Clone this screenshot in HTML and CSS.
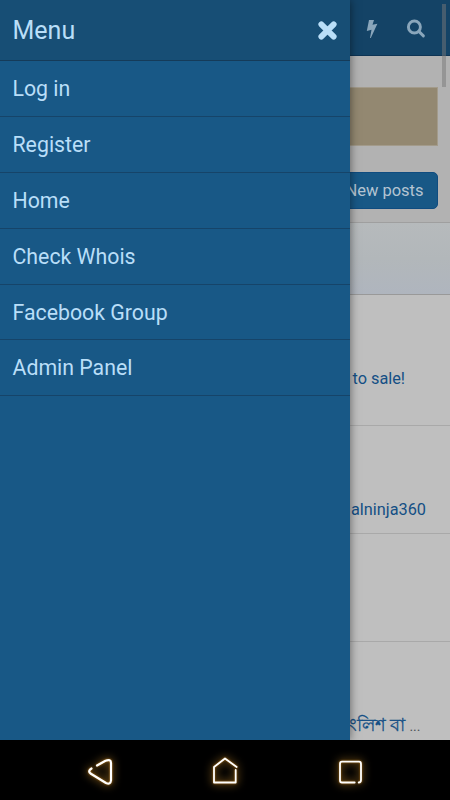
FILE: index.html
```
<!DOCTYPE html>
<html lang="en">
<head>
  <meta charset="UTF-8">
  <title>Menu</title>
  <link rel="stylesheet" href="styles.css">
</head>
<body>
  <div class="screen">
    <main class="page">
      <header class="topbar">
        <svg class="icon-bolt" viewBox="0 0 12 20"><path d="M3 1h5L6.500 5.800l4.900-1L4.800 19H4l1.500-8.300-4.700 1.200z"/></svg>
        <svg class="icon-search" viewBox="0 0 20 20"><circle cx="8.400" cy="8" r="6"/><path d="M12.800 12.400l4.600 4.500"/></svg>
      </header>
      <div class="intro">
        <div class="banner"></div>
        <a class="button">New posts</a>
      </div>
      <div class="block-header"></div>
      <div class="row row-tall"><span>to sale!</span></div>
      <div class="row"><span>alninja360</span></div>
      <div class="row"></div>
      <div class="row row-last"><span class="bangla" lang="bn">বাংলিশ বা <i>...</i></span></div>
      <div class="scrollbar"></div>
    </main>

    <aside class="drawer">
      <div class="drawer-header">
        <span>Menu</span>
        <svg class="icon-close" viewBox="0 0 18 18"><path d="M3.700 3.700l10.600 10.600M14.300 3.700L3.700 14.300"/></svg>
      </div>
      <nav class="menu">
        <a>Log in</a>
        <a>Register</a>
        <a>Home</a>
        <a>Check Whois</a>
        <a>Facebook Group</a>
        <a>Admin Panel</a>
      </nav>
    </aside>

    <footer class="system-nav">
      <svg viewBox="0 0 60 60"><path d="M27 25.500l8.500-4.800Q41 18.700 41 23v17.500Q40.500 45 36 43l-15.500-9.500Q17.500 31 21.500 28.500"/></svg>
      <svg class="home" viewBox="0 0 60 60"><path d="M41.700 27L30 18.500 19 27v15.500h21.700V30"/></svg>
      <svg class="recent" viewBox="0 0 60 60"><path d="M34.700 42.500H22q-2 0-2-2V24q0-2.300 2-2.300h17q2 0 2 2.300v16q0 2.500-2.300 2.500"/></svg>
    </footer>
  </div>
</body>
</html>
```
FILE: styles.css
```
body {
  margin: 0;
  font-family: Roboto, "Noto Sans", sans-serif;
}

.screen {
  position: relative;
  width: 450px;
  height: 800px;
  overflow: hidden;
  background: #000;
}

.page {
  position: relative;
  height: 740px;
  overflow: hidden;
  background: #bfbfbf;
}

svg {
  fill: none;
  stroke-linecap: round;
  stroke-linejoin: round;
}

.topbar {
  display: flex;
  justify-content: flex-end;
  align-items: center;
  gap: 28px;
  box-sizing: border-box;
  height: 56px;
  padding: 2px 24px 0 0;
  border-bottom: 1px solid #0e3454;
  background: #144366;
}

.icon-bolt {
  width: 12px;
  height: 20px;
  fill: #8aa6bb;
}

.icon-search {
  width: 20px;
  height: 20px;
  stroke: #8aa6bb;
  stroke-width: 2.9;
}

.intro {
  display: flex;
  flex-direction: column;
  align-items: flex-end;
  box-sizing: border-box;
  height: 167px;
  padding: 31px 12.5px 0 0;
  border-bottom: 1px solid #9f9f9f;
  background: #b2b2b2;
}

.banner {
  box-sizing: border-box;
  width: 425px;
  height: 59px;
  border: 1px solid #a39b8b;
  background: #938871;
}

.button {
  box-sizing: border-box;
  height: 37.5px;
  margin-top: 25.5px;
  padding: 0 13px;
  border: 1px solid #0f4c80;
  border-radius: 5px;
  background: #185886;
  color: #b4c4d2;
  font-size: 16.5px;
  line-height: 36px;
}

.block-header {
  box-sizing: border-box;
  height: 72px;
  border-bottom: 1px solid #999;
  background: linear-gradient(#b6babc, #b2b7ba 50%, #afb5be);
}

.row {
  display: flex;
  align-items: flex-end;
  box-sizing: border-box;
  height: 108px;
  padding: 0 0 13px 351px;
  border-bottom: 1px solid #a9a9a9;
  color: #144f85;
  font-size: 16.3px;
  line-height: 20px;
  white-space: nowrap;
}

.row-tall {
  height: 131px;
  padding: 0 0 36px 352.5px;
}

.row-last {
  height: 98px;
  padding: 0 29.5px 4px 0;
  border-bottom: 0;
  justify-content: flex-end;
}

.bangla {
  font-size: 17.5px;
  -webkit-text-stroke: 0.3px #144f85;
}

.bangla i {
  color: #4d5257;
  font-size: 14px;
  font-style: normal;
  -webkit-text-stroke: 0;
}

.scrollbar {
  position: absolute;
  top: 4px;
  right: 4px;
  width: 4px;
  height: 83px;
  background: rgba(120, 120, 120, 0.5);
}

.drawer {
  position: absolute;
  top: 0;
  left: 0;
  width: 350px;
  height: 740px;
  background: #185886;
  box-shadow: 0 0 9px rgba(0, 0, 0, 0.5);
  color: #b9def8;
}

.drawer-header {
  display: flex;
  justify-content: space-between;
  align-items: center;
  box-sizing: border-box;
  height: 61px;
  padding: 0 12px 0 12.5px;
  border-bottom: 1px solid #153b59;
  background: #174e75;
  font-size: 25px;
}

.icon-close {
  width: 21px;
  height: 21px;
  stroke: #b9def8;
  stroke-width: 5;
}

.menu a {
  display: block;
  box-sizing: border-box;
  height: 55.9px;
  padding-left: 12.5px;
  border-bottom: 1px solid #164469;
  font-size: 21.3px;
  line-height: 55px;
}

.system-nav {
  display: flex;
  justify-content: center;
  gap: 65px;
  height: 60px;
  background: #000;
}

.system-nav svg {
  width: 60px;
  height: 60px;
  stroke: #fff;
  stroke-width: 2.2;
  filter: drop-shadow(0 0 1px #a66b12) drop-shadow(0 0 4px #a87525);
}

.system-nav .home,
.system-nav .recent {
  stroke-width: 1.8;
}
```
